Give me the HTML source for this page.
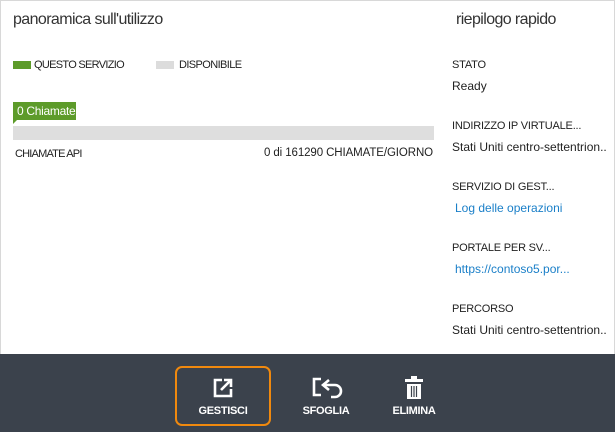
<!DOCTYPE html>
<html><head><meta charset="utf-8"><style>
*{margin:0;padding:0;box-sizing:border-box}
html,body{width:615px;height:432px;overflow:hidden;background:#fff;font-family:"Liberation Sans",sans-serif;color:#222}
.frame{position:absolute;left:0;top:0;width:615px;height:432px;border:1px solid #d8d8d8}
.a{position:absolute;white-space:nowrap}
.t{font-size:16px;color:#333;letter-spacing:-0.6px}
.s{font-size:11px;color:#222;letter-spacing:-0.2px}
.v{font-size:12px;color:#222;letter-spacing:0}
.l{font-size:12px;color:#1a7fc8;letter-spacing:0}
.bar{position:absolute;left:0;top:354px;width:615px;height:78px;background:#3b424c}
.btn{position:absolute;color:#fff;font-size:11px;font-weight:bold;text-align:center;letter-spacing:-0.3px}
</style></head><body>
<div class="frame"></div>
<div class="a t" style="left:13px;top:11px">panoramica sull'utilizzo</div>
<div class="a t" style="left:456px;top:11px">riepilogo rapido</div>

<div class="a" style="left:13px;top:61px;width:18px;height:8px;background:#5d9b2a"></div>
<div class="a s" style="left:34px;top:59px;letter-spacing:-0.7px">QUESTO SERVIZIO</div>
<div class="a" style="left:156px;top:61px;width:18px;height:8px;background:#dcdcdc"></div>
<div class="a s" style="left:179px;top:59px;letter-spacing:-0.6px">DISPONIBILE</div>

<div class="a" style="left:13px;top:102px;width:63px;height:18px;background:#5d9b2a;color:#fff;font-size:12px;padding:2px 0 0 4px;letter-spacing:-0.3px">0 Chiamate</div>
<div class="a" style="left:13px;top:119px;width:0;height:0;border-top:5px solid #5d9b2a;border-right:5px solid transparent"></div>
<div class="a" style="left:13px;top:126px;width:421px;height:14px;background:#dedede"></div>
<div class="a s" style="left:15px;top:148px;letter-spacing:-0.8px">CHIAMATE API</div>
<div class="a s" style="right:182px;top:147px;font-size:11.5px;letter-spacing:-0.1px">0 di 161290 CHIAMATE/GIORNO</div>

<div class="a s" style="left:452px;top:59px">STATO</div>
<div class="a v" style="left:452px;top:79px">Ready</div>
<div class="a s" style="left:452px;top:120px">INDIRIZZO IP VIRTUALE...</div>
<div class="a v" style="left:452px;top:140px">Stati Uniti centro-settentrion..</div>
<div class="a s" style="left:452px;top:181px">SERVIZIO DI GEST...</div>
<div class="a l" style="left:455px;top:201px">Log delle operazioni</div>
<div class="a s" style="left:452px;top:242px">PORTALE PER SV...</div>
<div class="a l" style="left:455px;top:262px">https://contoso5.por...</div>
<div class="a s" style="left:452px;top:303px">PERCORSO</div>
<div class="a v" style="left:452px;top:323px">Stati Uniti centro-settentrion..</div>

<div class="bar"></div>
<div class="a" style="left:175px;top:366px;width:96px;height:60px;border:2px solid #f0890e;border-radius:7px"></div>
<svg class="a" style="left:212px;top:377px" width="24" height="22" viewBox="0 0 24 22">
<path d="M10 3H3v16h16v-7" fill="none" stroke="#fff" stroke-width="2.6"/>
<path d="M9 13L19 3M12 3h7v7" fill="none" stroke="#fff" stroke-width="2.6"/>
</svg>
<div class="btn" style="left:175px;top:405px;width:96px">GESTISCI</div>

<svg class="a" style="left:311px;top:376px" width="34" height="24" viewBox="0 0 34 24">
<path d="M10 3H3v16h7" fill="none" stroke="#fff" stroke-width="2.6"/>
<path d="M14 9h10a6 6 0 0 1 0 12h-4" fill="none" stroke="#fff" stroke-width="2.6"/>
<path d="M18 4l-6 5 6 5" fill="none" stroke="#fff" stroke-width="2.6"/>
</svg>
<div class="btn" style="left:296px;top:405px;width:60px">SFOGLIA</div>

<svg class="a" style="left:404px;top:376px" width="20" height="24" viewBox="0 0 20 24">
<rect x="1" y="3" width="18" height="3" fill="#fff"/>
<rect x="7" y="0" width="6" height="3" fill="#fff"/>
<path d="M3 8h14v15H3z" fill="#fff"/>
<path d="M7.5 10v11M10 10v11M12.5 10v11" stroke="#3b424c" stroke-width="1.2"/>
</svg>
<div class="btn" style="left:384px;top:405px;width:60px">ELIMINA</div>
</body></html>
